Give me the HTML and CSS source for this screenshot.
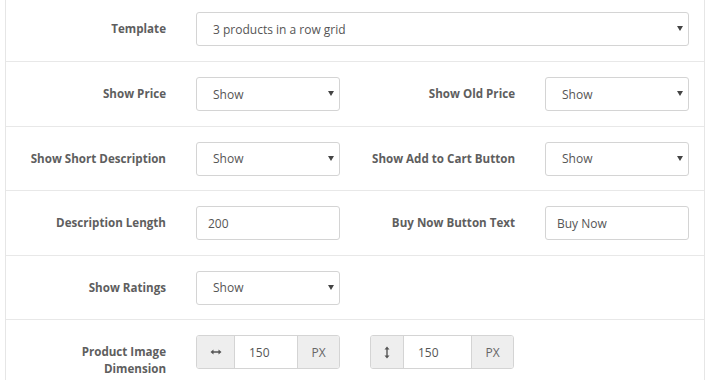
FILE: index.html
```html
<!DOCTYPE html>
<html lang="en">
<head>
<meta charset="UTF-8" />
<title>Product Grid Settings</title>
<link rel="stylesheet" href="styles.css">
</head>
<body>

<!-- SETTINGS PANEL -->
<form class="panel">
  <div class="row first">
    <label class="label">Template</label>
    <div class="select wide">
      <select><option>3 products in a row grid</option></select>
    </div>
  </div>

  <div class="row">
    <label class="label">Show Price</label>
    <div class="select"><select><option>Show</option></select></div>
    <label class="label">Show Old Price</label>
    <div class="select"><select><option>Show</option></select></div>
  </div>

  <div class="row">
    <label class="label">Show Short Description</label>
    <div class="select"><select><option>Show</option></select></div>
    <label class="label">Show Add to Cart Button</label>
    <div class="select"><select><option>Show</option></select></div>
  </div>

  <div class="row">
    <label class="label">Description Length</label>
    <input class="input" type="text" value="200">
    <label class="label">Buy Now Button Text</label>
    <input class="input" type="text" value="Buy Now">
  </div>

  <div class="row">
    <label class="label">Show Ratings</label>
    <div class="select"><select><option>Show</option></select></div>
  </div>

  <div class="row">
    <label class="label wrap">Product Image Dimension</label>
    <div class="dims">
      <div class="input-group">
        <span class="addon icon">
          <svg width="12" height="8" viewBox="0 0 12 8" aria-hidden="true">
            <path d="M0.5 4 L3.5 1.5 L3.5 3.3 L8.5 3.3 L8.5 1.5 L11.5 4 L8.5 6.5 L8.5 4.7 L3.5 4.7 L3.5 6.5 Z" fill="#555"/>
          </svg>
        </span>
        <input type="text" value="150">
        <span class="addon">PX</span>
      </div>
      <div class="input-group">
        <span class="addon icon narrow">
          <svg width="8" height="13" viewBox="0 0 8 13" aria-hidden="true">
            <path d="M4 0.5 L6.5 3.5 L4.7 3.5 L4.7 9.5 L6.5 9.5 L4 12.5 L1.5 9.5 L3.3 9.5 L3.3 3.5 L1.5 3.5 Z" fill="#555"/>
          </svg>
        </span>
        <input type="text" value="150">
        <span class="addon">PX</span>
      </div>
    </div>
  </div>
</form>

</body>
</html>
```

FILE: styles.css
```css
/* Reset */
*, *::before, *::after {
  box-sizing: border-box;
}
body {
  margin: 0;
  background: white;
  font-family: 'Open Sans', 'Liberation Sans', sans-serif;
  color: #555;
}

/* Panel */
.panel {
  width: 700px;
  margin-left: 5px;
  border-left: 1px solid #e6e6e6;
  border-right: 1px solid #e6e6e6;
}
.row {
  display: grid;
  grid-template-columns: 160px 144px 145px 144px;
  column-gap: 30px;
  padding: 15px 15px 14.5px 0;
  border-bottom: 1px solid #e8e8e8;
  align-items: start;
}
.row.first {
  padding-top: 12px;
  padding-bottom: 15px;
}
.label {
  font-size: 11.6px;
  font-weight: 700;
  line-height: 17px;
  color: #5e5e5e;
  text-align: right;
  white-space: nowrap;
  padding-top: 8px;
}
.label.wrap {
  white-space: normal;
  padding-left: 24px;
}

/* Controls */
.select {
  position: relative;
  height: 34px;
}
.select.wide {
  grid-column: 2 / 5;
}
.select select {
  appearance: none;
  -webkit-appearance: none;
  width: 100%;
  height: 34px;
  border: 1px solid #d4d4d4;
  border-radius: 3px;
  background: white;
  font-family: inherit;
  font-size: 12px;
  color: #555;
  padding: 0 24px 0 16px;
  outline: none;
}
.select::after {
  content: "";
  position: absolute;
  right: 6px;
  top: 14px;
  border-left: 3px solid transparent;
  border-right: 3px solid transparent;
  border-top: 5px solid #444;
  pointer-events: none;
}
.input {
  height: 34px;
  width: 100%;
  border: 1px solid #d4d4d4;
  border-radius: 3px;
  font-family: inherit;
  font-size: 12px;
  color: #555;
  padding: 0 11px;
  outline: none;
}

/* Dimension inputs */
.dims {
  grid-column: 2 / 5;
  display: flex;
  gap: 30px;
}
.input-group {
  display: flex;
  width: 144px;
  height: 34px;
  border: 1px solid #d4d4d4;
  border-radius: 3px;
  overflow: hidden;
}
.input-group input {
  width: 0;
  flex: 1;
  border: none;
  border-left: 1px solid #d4d4d4;
  border-right: 1px solid #d4d4d4;
  font-family: inherit;
  font-size: 12px;
  color: #555;
  padding: 0 14px;
  outline: none;
}
.addon {
  background: #eeeeee;
  display: flex;
  align-items: center;
  justify-content: center;
  width: 41px;
  font-size: 12px;
  color: #666;
}
.addon.icon {
  width: 37px;
}
.addon.narrow {
  width: 32px;
}
```
